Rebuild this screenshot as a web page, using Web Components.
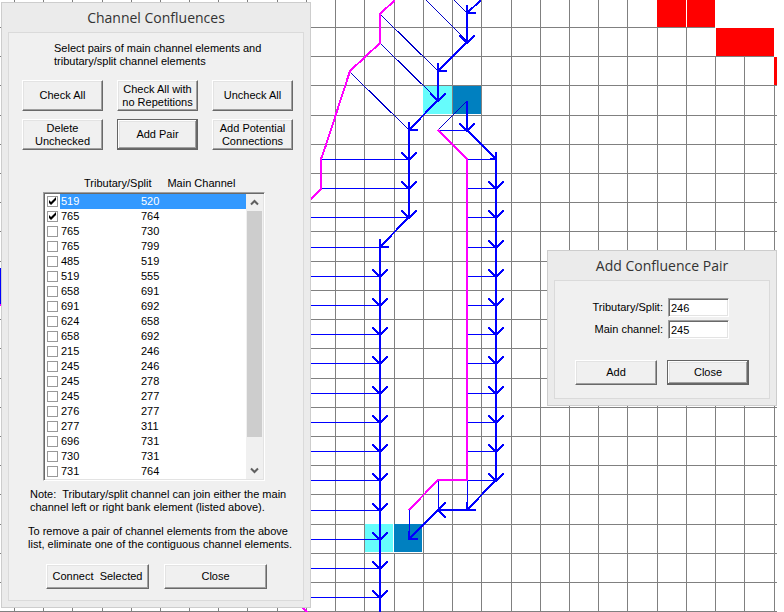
<!DOCTYPE html>
<html lang="en">
<head>
<meta charset="utf-8">
<title>Channel Confluences</title>
<style>
html, body { margin: 0; height: 100%; background: #fff; }
body { font: 11px/13px "Liberation Sans", Arial, sans-serif; color: #000; overflow: hidden; }
</style>
</head>
<body>
<app-desktop></app-desktop>
<script>
const define = (name, markup, setup) => {
  const template = document.createElement('template');
  template.innerHTML = markup;
  customElements.define(name, class extends HTMLElement {
    constructor() {
      super();
      this.attachShadow({ mode: 'open' }).append(template.content.cloneNode(true));
    }
    connectedCallback() {
      if (setup && !this.ready) { this.ready = true; setup(this, this.shadowRoot); }
    }
  });
};

/* Push button with a raised 3D edge; "default" adds the dark frame. */
define('bevel-button', `
<style>
:host { display: block; min-width: 0; }
button { box-sizing: border-box; width: 100%; height: 100%; margin: 0; padding: 0; font: inherit; color: inherit;
  background: #f0f0f0; border: 1px solid; border-color: #fff #696969 #696969 #fff; border-radius: 0; text-align: center;
  box-shadow: inset -1px -1px #a0a0a0, inset 1px 1px #e3e3e3; }
:host([default]) button { border-color: #646464;
  box-shadow: inset -1px -1px #696969, inset 1px 1px #fff, inset -2px -2px #a0a0a0, inset 2px 2px #e3e3e3; }
</style>
<button type="button"><slot></slot></button>`);

/* Window frame: title bar and an inset client area. */
define('dialog-window', `
<style>
:host { display: flex; flex-direction: column; box-sizing: border-box; background: #ebebeb; border: 1px solid #cdcdcd; padding: 0 6px 6px; }
h2 { margin: 0; height: 29px; font: 14px/29px "Open Sans", "Noto Sans", sans-serif; color: #333; text-align: center; }
.client { flex: 1; background: #f0f0f0; border: 1px solid #dadada; }
</style>
<h2></h2>
<div class="client"><slot></slot></div>`, (el, root) => {
  root.querySelector('h2').textContent = el.getAttribute('heading');
});

/* Labelled sunken text box. */
define('edit-field', `
<style>
:host { display: flex; justify-content: flex-end; align-items: center; gap: 5px; }
input { box-sizing: border-box; width: 61px; height: 19px; margin: 0; padding: 0 2px; font: inherit; color: inherit;
  background: #fff; border: 1px solid; border-color: #a0a0a0 #fff #fff #a0a0a0; border-radius: 0;
  box-shadow: inset 1px 1px #696969, inset -1px -1px #e3e3e3; }
</style>
<label for="field"></label><input id="field" type="text">`, (el, root) => {
  root.querySelector('label').textContent = el.getAttribute('label');
  root.querySelector('input').value = el.getAttribute('value');
});

define('scroll-bar', `
<style>
:host { display: flex; flex-direction: column; width: 17px; background: #f0f0f0; }
button { height: 17px; width: 100%; padding: 0; border: 0; background: none; display: flex; align-items: center; justify-content: center; }
.track { flex: 1; padding: 0 1px; display: flex; flex-direction: column; }
.thumb { height: 90%; background: #cdcdcd; }
path { fill: none; stroke: #606060; stroke-width: 2; }
</style>
<button type="button" aria-label="Scroll up"><svg width="9" height="7"><path d="M1 5.5 4.5 2 8 5.5"/></svg></button>
<div class="track"><div class="thumb"></div></div>
<button type="button" aria-label="Scroll down"><svg width="9" height="7"><path d="M1 1.5 4.5 5 8 1.5"/></svg></button>`);

/* Checked list of tributary and main channel pairs. */
define('pair-list', `
<style>
:host { display: flex; box-sizing: border-box; background: #fff; border: 1px solid; border-color: #a0a0a0 #fff #fff #a0a0a0;
  box-shadow: inset 1px 1px #696969, inset -1px -1px #e3e3e3; padding: 1px; }
table { flex: 1; table-layout: fixed; border-collapse: collapse; width: 0; }
td { padding: 0 0 0 1px; height: 15px; line-height: 15px; vertical-align: top; }
td:first-child { width: 13px; padding: 2px 0 0 2px; height: 13px; line-height: 0; background: #fff; }
td:nth-child(2) { width: 79px; }
.selected { background: #39f; color: #fff; }
label { display: block; }
input { appearance: none; box-sizing: border-box; width: 11px; height: 11px; margin: 0; border: 1px solid #999; background: #fff; display: grid; }
input:checked::before { content: ""; background: #000; clip-path: polygon(1px 3px, 3px 5px, 8px 0, 8px 3px, 3px 8px, 1px 6px); }
</style>
<table aria-label="Channel element pairs"><tbody></tbody></table>
<scroll-bar></scroll-bar>`, (el, root) => {
  const pairs = [[519,520],[765,764],[765,730],[765,799],[485,519],[519,555],[658,691],[691,692],[624,658],[658,692],
    [215,246],[245,246],[245,278],[245,277],[276,277],[277,311],[696,731],[730,731],[731,764]];
  root.querySelector('tbody').innerHTML = pairs.map(([a, b], i) =>
    `<tr${i ? '' : ' class="selected"'}><td><input type="checkbox" id="p${i}"${i < 2 ? ' checked' : ''}></td><td><label for="p${i}">${a}</label></td><td>${b}</td></tr>`).join('');
});

define('confluence-form', `
<style>
:host { display: flex; flex-direction: column; padding: 9px 10px 11px 13px; }
p { margin: 0; }
.intro { padding-left: 32px; white-space: nowrap; }
.actions { display: grid; grid-template-columns: repeat(3, 1fr); grid-auto-rows: 31px; gap: 8px 14px; margin-top: 12px; }
.heads { display: flex; gap: 16px; margin: 27px 0 2px 62px; }
pair-list { margin: 0 28px 0 21px; height: 289px; }
.note { margin: 7px 0 0 8px; white-space: nowrap; }
.note + .note { margin: 11px 0 0 6px; }
.foot { display: grid; grid-template-columns: 1fr 1fr; grid-auto-rows: 25px; gap: 15px; margin: 13px 26px 0 24px; }
</style>
<p class="intro">Select pairs of main channel elements and<br>tributary/split channel elements</p>
<div class="actions">
  <bevel-button>Check All</bevel-button>
  <bevel-button>Check All with<br>no Repetitions</bevel-button>
  <bevel-button>Uncheck All</bevel-button>
  <bevel-button>Delete<br>Unchecked</bevel-button>
  <bevel-button default>Add Pair</bevel-button>
  <bevel-button>Add Potential<br>Connections</bevel-button>
</div>
<div class="heads"><span>Tributary/Split</span><span>Main Channel</span></div>
<pair-list></pair-list>
<p class="note">Note:&nbsp; Tributary/split channel can join either the main<br>channel left or right bank element (listed above).</p>
<p class="note">To remove a pair of channel elements from the above<br>list, eliminate one of the contiguous channel elements.</p>
<div class="foot">
  <bevel-button>Connect&nbsp; Selected</bevel-button>
  <bevel-button>Close</bevel-button>
</div>`);

define('pair-form', `
<style>
:host { display: flex; flex-direction: column; padding: 17px 20px 13px; }
.fields { display: flex; flex-direction: column; gap: 3px; margin-right: 20px; }
.foot { display: grid; grid-template-columns: 1fr 1fr; grid-auto-rows: 25px; gap: 10px; margin-top: 21px; }
</style>
<div class="fields">
  <edit-field label="Tributary/Split:" value="246"></edit-field>
  <edit-field label="Main channel:" value="245"></edit-field>
</div>
<div class="foot">
  <bevel-button>Add</bevel-button>
  <bevel-button default>Close</bevel-button>
</div>`);

/* Grid map with channel and bank lines. */
define('channel-map', `
<style>
:host { display: block; height: 100%; }
svg { display: block; width: 100%; height: 100%; }
path { fill: none; shape-rendering: crispEdges; }
.grid { fill: #808080; }
.thin { stroke: #0000c8; stroke-width: 1; }
.level { fill: #00f; }
.flow { stroke: #00f; stroke-width: 2; }
.heads { stroke: #00f; stroke-width: 2; stroke-linecap: square; }
.bank { stroke: #f0f; stroke-width: 2; }
.red { fill: #f00; } .cyan { fill: #66fcfc; } .teal { fill: #0080c0; } .gap { fill: #fff; }
</style>
<svg viewBox="0 0 784 612" preserveAspectRatio="xMinYMin slice" role="img" aria-label="Channel map">
  <path class="grid"/>
  <path class="red" d="M657 0h29v27h-29zM687 0h28v27h-28zM716 28h58v28h-58zM774 57h3v28h-3z"/>
  <path class="gap" d="M423 114h58v1h-58zM365 552h57v1h-57zM393 524h1v28h-1z"/>
  <path class="cyan" d="M423 86h29v28h-29zM365 524h28v28h-28z"/>
  <path class="teal" d="M453 86h28v28h-28zM394 524h28v28h-28z"/>
  <path class="level"/>
  <path class="thin" d="M380 14 438 71M380 43 438 100M350 72 409 130M426 0 467 41M454 0 467 13M467 101 438 130"/>
  <path class="flow"/>
  <path class="heads"/>
  <path class="bank" d="M395 0 380 14V43L350 71 325 148 321 159V189L309 201M438 130 467 159V480H438L409 510M302 607 308 613"/>
  <path class="level" d="M0 268h1v36h-1z"/>
  <path d="M0 304h1v2h-1z" style="fill:#f0f"/>
</svg>`, (el, root) => {
  const xs = [14,43,72,102,131,160,189,218,247,277,306,335,364,394,423,452,481,511,540,569,598,627,657,686,715,744,774];
  const ys = [27,56,85,115,144,173,202,231,261,290,319,348,378,407,436,465,494,524,553,582,611];
  const top = { 657: 27, 686: 27, 715: 56, 744: 56, 774: 85 };
  const right = { 27: 715, 56: 774 };
  root.querySelector('.grid').setAttribute('d',
    xs.map(x => `M${x} ${top[x] || 0}h1V612h-1z`).join('') + ys.map(y => `M0 ${y}H${right[y] || 777}v1H0z`).join(''));

  const rows = [159,188,217,247,276,305,334,363,393,422,451,480,510,539,568,597];
  const left = rows.map((y, i) => `M${i < 2 ? 321 : 300} ${y}H${i < 3 ? 409 : 380}v1H${i < 2 ? 321 : 300}z`).join('');
  const mid = rows.slice(0, 12).map(y => `M467 ${y}H496v1H467z`).join('');
  root.querySelector('.level').setAttribute('d', left + mid +
    'M438 130h29v1h-29zM438 480h1v30h-1zM467 480h1v30h-1zM409 510h1v29h-1z');

  root.querySelector('.flow').setAttribute('d',
    'M481 0 467 13V42L438 71V100L409 130V217L380 247V612M467 101V130L496 159V480L467 510H438L409 539');

  const down = (x, y) => `M${x - 7} ${y - 6} ${x} ${y + 1} ${x + 7} ${y - 6}`;
  const slant = (x, y) => `M${x} ${y - 7}V${y}H${x + 8}`;
  let d = down(467, 42) + down(438, 100) + down(467, 130);
  for (const y of rows.slice(0, 3)) d += down(409, y);
  for (const y of rows.slice(4)) d += down(380, y);
  for (const y of rows.slice(1, 12)) d += down(496, y);
  for (const [x, y] of [[467,13],[438,71],[409,130],[380,247],[467,510],[409,539]]) d += slant(x, y);
  d += 'M496 153V159H491M445 503 438 510 445 517';
  root.querySelector('.heads').setAttribute('d', d);
});

define('app-desktop', `
<style>
:host { display: block; position: relative; height: 100%; }
dialog-window { position: absolute; }
.main { left: 1px; top: 2px; width: 310px; }
.pair { left: 547px; top: 250px; width: 230px; }
</style>
<channel-map></channel-map>
<dialog-window class="main" heading="Channel Confluences"><confluence-form></confluence-form></dialog-window>
<dialog-window class="pair" heading="Add Confluence Pair"><pair-form></pair-form></dialog-window>`);
</script>
</body>
</html>
